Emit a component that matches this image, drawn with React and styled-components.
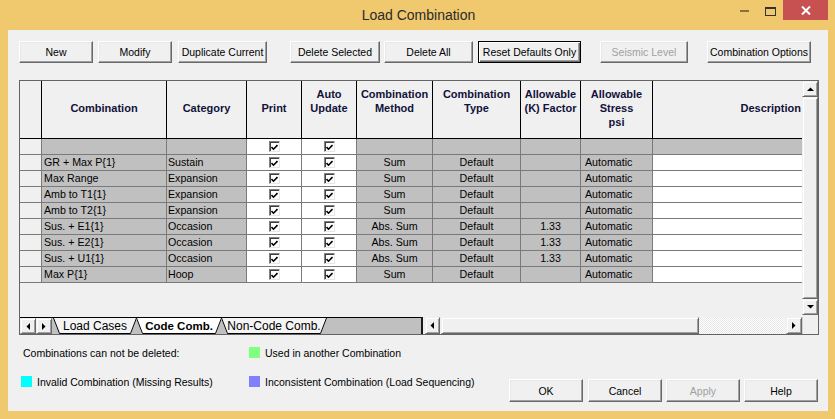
import React from "react";
import styled, { createGlobalStyle, css } from "styled-components";

const GlobalStyle = createGlobalStyle`
  html, body { margin: 0; padding: 0; background: #f0c86e; }
  body { font-family: "Liberation Sans", Arial, sans-serif; }
`;

const cols = [22, 125, 80, 55, 55, 76, 88, 60, 72, 149];
const colTemplate = cols.map((c) => `${c}px`).join(" ");

const topButtons = [
    { label: "New", w: 74, ml: 0 },
    { label: "Modify", w: 74, ml: 5 },
    { label: "Duplicate Current", w: 89, ml: 6 },
    { label: "Delete Selected", w: 90, ml: 23 },
    { label: "Delete All", w: 89, ml: 4 },
    { label: "Reset Defaults Only", w: 103, ml: 5, isDefault: true },
    { label: "Seismic Level", w: 88, ml: 19, disabled: true },
    { label: "Combination Options", w: 104, ml: 19 },
];

const headers = [
    { text: "" },
    { text: "Combination" },
    { text: "Category" },
    { text: "Print" },
    { text: "Auto\nUpdate\n\u00a0" },
    { text: "Combination\nMethod\n\u00a0" },
    { text: "Combination\nType\n\u00a0" },
    { text: "Allowable\n(K) Factor\n\u00a0" },
    { text: "Allowable\nStress\npsi" },
    { text: "Description", right: true },
];

const rows = [
    { name: "", cat: "", method: "", type: "", k: "", stress: "", blank: true },
    { name: "GR + Max P{1}", cat: "Sustain", method: "Sum", type: "Default", k: "", stress: "Automatic" },
    { name: "Max Range", cat: "Expansion", method: "Sum", type: "Default", k: "", stress: "Automatic" },
    { name: "Amb to T1{1}", cat: "Expansion", method: "Sum", type: "Default", k: "", stress: "Automatic" },
    { name: "Amb to T2{1}", cat: "Expansion", method: "Sum", type: "Default", k: "", stress: "Automatic" },
    { name: "Sus. + E1{1}", cat: "Occasion", method: "Abs. Sum", type: "Default", k: "1.33", stress: "Automatic" },
    { name: "Sus. + E2{1}", cat: "Occasion", method: "Abs. Sum", type: "Default", k: "1.33", stress: "Automatic" },
    { name: "Sus. + U1{1}", cat: "Occasion", method: "Abs. Sum", type: "Default", k: "1.33", stress: "Automatic" },
    { name: "Max P{1}", cat: "Hoop", method: "Sum", type: "Default", k: "", stress: "Automatic" },
];

const tabs = [
    { label: "Load Cases", w: 84 },
    { label: "Code Comb.", w: 86, active: true },
    { label: "Non-Code Comb.", w: 106 },
];

const CheckMark = () => (
    <svg width="7" height="7" viewBox="0 0 7 7">
        <polyline points="0.5,3 2.5,5.2 6.5,1" fill="none" stroke="#000" strokeWidth="1.6" />
    </svg>
);

const Arrow = ({ dir }) => {
    const pts = {
        up: "0,4 7,4 3.5,0.5",
        down: "0,0 7,0 3.5,3.5",
        left: "4,0 4,7 0.5,3.5",
        right: "0,0 0,7 3.5,3.5",
    }[dir];
    const vertical = dir === "up" || dir === "down";
    return (
        <svg width={vertical ? 7 : 4} height={vertical ? 4 : 7}>
            <polygon points={pts} fill="#000" />
        </svg>
    );
};

const TabItem = ({ label, w, active }) => (
    <Tab $w={w} $active={active}>
        <svg width={w} height="16">
            <polygon points={`0,0 ${w},0 ${w - 6},15.5 6,15.5`} fill={active ? "#ffffff" : "#f4f4f4"} />
            <polyline
                points={`0.5,0 6.5,15.5 ${w - 6.5},15.5 ${w - 0.5},0`}
                fill="none"
                stroke="#000"
                strokeWidth="1"
            />
        </svg>
        <TabLabel $active={active}>{label}</TabLabel>
    </Tab>
);

const App = () => {
    return (
        <Frame>
            <GlobalStyle />
            <TitleBar>
                <span />
                <Title>Load Combination</Title>
                <Controls>
                    <CtrlBtn>
                        <svg width="9" height="3">
                            <rect x="0" y="0" width="9" height="2" fill="#8a7240" />
                        </svg>
                    </CtrlBtn>
                    <CtrlBtn>
                        <svg width="11" height="9">
                            <rect x="0.5" y="0.5" width="10" height="8" fill="none" stroke="#333" />
                            <rect x="0" y="0" width="11" height="2" fill="#333" />
                        </svg>
                    </CtrlBtn>
                    <CloseBtn>
                        <svg width="10" height="9">
                            <path d="M1 0.5 L9 8.5 M9 0.5 L1 8.5" stroke="#fff" strokeWidth="2" />
                        </svg>
                    </CloseBtn>
                </Controls>
            </TitleBar>

            <Client>
                <Toolbar>
                    {topButtons.map((b) => (
                        <Btn key={b.label} $w={b.w} $ml={b.ml} $default={b.isDefault} disabled={b.disabled}>
                            {b.label}
                        </Btn>
                    ))}
                </Toolbar>

                <GridBox>
                    <GridMain>
                        <Sheet>
                            <Row $h={58}>
                                {headers.map((h, i) => (
                                    <HeadCell key={i} $right={h.right} $last={i === headers.length - 1}>
                                        {h.text}
                                    </HeadCell>
                                ))}
                            </Row>
                            {rows.map((r, i) => (
                                <Row key={i} $h={16}>
                                    <Cell $bg="#f0f0f0" />
                                    <Cell $bg="#c0c0c0" $pad="0 0 0 2px">{r.name}</Cell>
                                    <Cell $bg="#c0c0c0" $pad="0 0 0 1px">{r.cat}</Cell>
                                    <Cell $bg="#fff" $center>
                                        <Check><CheckMark /></Check>
                                    </Cell>
                                    <Cell $bg="#fff" $center>
                                        <Check><CheckMark /></Check>
                                    </Cell>
                                    <Cell $bg="#c0c0c0" $center>{r.method}</Cell>
                                    <Cell $bg="#c0c0c0" $center>{r.type}</Cell>
                                    <Cell $bg="#c0c0c0" $center>{r.k}</Cell>
                                    <Cell $bg="#c0c0c0" $pad="0 0 0 4px">{r.stress}</Cell>
                                    <Cell $bg={r.blank ? "#c0c0c0" : "#fff"} $last />
                                </Row>
                            ))}
                        </Sheet>
                        <VScroll>
                            <ScrollBtn $h={16}><Arrow dir="up" /></ScrollBtn>
                            <Thumb />
                            <ScrollBtn $h={16}><Arrow dir="down" /></ScrollBtn>
                            <ScrollGap />
                        </VScroll>
                    </GridMain>

                    <GridFoot>
                        <TabArea>
                            <NavBtn><Arrow dir="left" /></NavBtn>
                            <NavBtn><Arrow dir="right" /></NavBtn>
                            <TabRow>
                                {tabs.map((t) => (
                                    <TabItem key={t.label} {...t} />
                                ))}
                            </TabRow>
                        </TabArea>
                        <Splitter />
                        <HScroll>
                            <ScrollBtn $w={15}><Arrow dir="left" /></ScrollBtn>
                            <HThumb />
                            <Track />
                            <ScrollBtn $w={16}><Arrow dir="right" /></ScrollBtn>
                        </HScroll>
                        <Corner />
                    </GridFoot>
                </GridBox>

                <Footer>
                    <Legend>
                        <LegendItem $indent>Combinations can not be deleted:</LegendItem>
                        <LegendItem>
                            <Swatch $c="#80ff80" />
                            Used in another Combination
                        </LegendItem>
                        <LegendItem>
                            <Swatch $c="#00ffff" />
                            Invalid Combination (Missing Results)
                        </LegendItem>
                        <LegendItem>
                            <Swatch $c="#8080ff" />
                            Inconsistent Combination (Load Sequencing)
                        </LegendItem>
                    </Legend>
                    <DialogButtons>
                        <Btn $w={74} $h={23}>OK</Btn>
                        <Btn $w={74} $h={23} $ml={5}>Cancel</Btn>
                        <Btn $w={74} $h={23} $ml={4} disabled>Apply</Btn>
                        <Btn $w={74} $h={23} $ml={4}>Help</Btn>
                    </DialogButtons>
                </Footer>
            </Client>
        </Frame>
    );
};

const Frame = styled.div`
    width: 835px;
    height: 419px;
    background: #f0c86e;
    display: flex;
    flex-direction: column;
`;

const TitleBar = styled.div`
    height: 30px;
    display: grid;
    grid-template-columns: 1fr auto 1fr;
`;

const Title = styled.div`
    align-self: center;
    font: 14px "Liberation Sans", Arial, sans-serif;
    color: #2b2b2b;
    padding-left: 2px;
`;

const Controls = styled.div`
    justify-self: end;
    display: flex;
    align-items: flex-start;
    margin-right: 7px;
`;

const CtrlBtn = styled.div`
    width: 26px;
    height: 20px;
    display: flex;
    align-items: center;
    justify-content: center;
    padding-top: 2px;
    box-sizing: border-box;
`;

const CloseBtn = styled.div`
    width: 45px;
    height: 20px;
    background: #c75050;
    display: flex;
    align-items: center;
    justify-content: center;
`;

const Client = styled.div`
    margin: 0 7px 8px 8px;
    height: 381px;
    box-sizing: border-box;
    background: #f0f0f0;
    padding: 11px 9px 0 11px;
    display: flex;
    flex-direction: column;
`;

const Toolbar = styled.div`
    display: flex;
    height: 22px;
`;

const Btn = styled.button`
    box-sizing: border-box;
    width: ${(p) => p.$w}px;
    height: ${(p) => p.$h || 22}px;
    margin: 0 0 0 ${(p) => p.$ml || 0}px;
    padding: 0;
    font: 10.5px "Liberation Sans", Arial, sans-serif;
    color: #000;
    background: #f0f0f0;
    border: 1px solid;
    border-color: #fff #696969 #696969 #fff;
    box-shadow: inset -1px -1px 0 #a0a0a0, inset 1px 1px 0 #e8e8e8;
    white-space: nowrap;
    ${(p) =>
        p.$default &&
        css`
            border-color: #000;
            box-shadow: inset 1px 1px 0 #fff, inset -1px -1px 0 #696969, inset -2px -2px 0 #a0a0a0;
        `}
    &:disabled {
        color: #a0a0a0;
    }
`;

const GridBox = styled.div`
    margin-top: 17px;
    width: 800px;
    height: 255px;
    box-sizing: border-box;
    border: 1px solid #646464;
    display: flex;
    flex-direction: column;
`;

const GridMain = styled.div`
    display: flex;
    height: 236px;
`;

const Sheet = styled.div`
    width: 782px;
    background: #f0f0f0;
    display: flex;
    flex-direction: column;
`;

const Row = styled.div`
    display: grid;
    grid-template-columns: ${colTemplate};
    height: ${(p) => p.$h}px;
    flex-shrink: 0;
`;

const HeadCell = styled.div`
    box-sizing: border-box;
    border-right: ${(p) => (p.$last ? "none" : "1px solid #000")};
    border-bottom: 1px solid #000;
    background: #f0f0f0;
    display: flex;
    align-items: center;
    justify-content: ${(p) => (p.$right ? "flex-end" : "center")};
    text-align: center;
    font: bold 11px/14px "Liberation Sans", Arial, sans-serif;
    color: #12123a;
    white-space: pre-line;
    overflow: hidden;
    padding: 0 ${(p) => (p.$right ? "1px" : "0")} 3px 0;
`;

const Cell = styled.div`
    box-sizing: border-box;
    border-right: ${(p) => (p.$last ? "none" : "1px solid #7a7a7a")};
    border-bottom: 1px solid #7a7a7a;
    background: ${(p) => p.$bg};
    font: 8pt/15px "Liberation Sans", Arial, sans-serif;
    color: #000;
    padding: ${(p) => p.$pad || 0};
    white-space: nowrap;
    overflow: hidden;
    display: flex;
    align-items: center;
    justify-content: ${(p) => (p.$center ? "center" : "flex-start")};
`;

const Check = styled.span`
    width: 11px;
    height: 11px;
    box-sizing: border-box;
    background: #fff;
    border: 1px solid;
    border-color: #808080 #e6e6e6 #e6e6e6 #808080;
    box-shadow: inset 1px 1px 0 #404040;
    display: flex;
    align-items: center;
    justify-content: center;
    padding: 1px 0 0 1px;
`;

const ScrollBtn = styled.div`
    box-sizing: border-box;
    flex-shrink: 0;
    width: ${(p) => (p.$w ? `${p.$w}px` : "auto")};
    height: ${(p) => (p.$h ? `${p.$h}px` : "auto")};
    background: #f0f0f0;
    border: 1px solid;
    border-color: #f0f0f0 #696969 #696969 #f0f0f0;
    box-shadow: inset 1px 1px 0 #fff, inset -1px -1px 0 #a0a0a0;
    display: flex;
    align-items: center;
    justify-content: center;
`;

const VScroll = styled.div`
    width: 16px;
    display: flex;
    flex-direction: column;
    background: #f0f0f0;
`;

const Thumb = styled(ScrollBtn)`
    flex: 1;
`;

const ScrollGap = styled.div`
    height: 2px;
`;

const GridFoot = styled.div`
    display: flex;
    height: 17px;
`;

const TabArea = styled.div`
    width: 401px;
    box-sizing: border-box;
    background: #c0c0c0;
    border-top: 1px solid #000;
    display: flex;
`;

const NavBtn = styled(ScrollBtn)`
    width: 16px;
    height: 16px;
    background: #f0f0f0;
`;

const TabRow = styled.div`
    display: flex;
    margin-left: 1px;
`;

const Tab = styled.div`
    position: relative;
    width: ${(p) => p.$w}px;
    height: 16px;
    margin-right: -1px;
    z-index: ${(p) => (p.$active ? 2 : 1)};
    display: flex;
    align-items: center;
    justify-content: center;
    & > svg {
        position: absolute;
        left: 0;
        top: 0;
    }
`;

const TabLabel = styled.span`
    position: relative;
    font: ${(p) => (p.$active ? "bold 11.5px" : "12px")} "Liberation Sans", Arial, sans-serif;
    color: #000;
    white-space: nowrap;
    padding-bottom: 1px;
`;

const Splitter = styled.div`
    width: 2px;
    background: #1a1a1a;
    margin-right: 1px;
`;

const HScroll = styled.div`
    width: 378px;
    display: flex;
    padding: 0 0 0 1px;
    background: #f0f0f0;
`;

const HThumb = styled(ScrollBtn)`
    width: 258px;
    margin-left: 1px;
`;

const Track = styled.div`
    flex: 1;
    background-image: repeating-conic-gradient(#ffffff 0 25%, #e6e6e6 0 50%);
    background-size: 2px 2px;
`;

const Corner = styled.div`
    width: 16px;
    background: #f0f0f0;
    box-sizing: border-box;
    border-left: 1px solid #d0d0d0;
`;

const Footer = styled.div`
    display: flex;
    align-items: flex-start;
    padding-left: 2px;
`;

const Legend = styled.div`
    margin-top: 12px;
    display: grid;
    grid-template-columns: 228px auto;
    row-gap: 18px;
`;

const LegendItem = styled.div`
    display: flex;
    align-items: center;
    gap: 5px;
    height: 11px;
    font: 10.5px "Liberation Sans", Arial, sans-serif;
    color: #000;
    white-space: nowrap;
    padding-left: ${(p) => (p.$indent ? "2px" : "0")};
`;

const Swatch = styled.span`
    width: 11px;
    height: 11px;
    background: ${(p) => p.$c};
    flex-shrink: 0;
`;

const DialogButtons = styled.div`
    margin: 44px 1px 0 auto;
    display: flex;
`;

export default App;
